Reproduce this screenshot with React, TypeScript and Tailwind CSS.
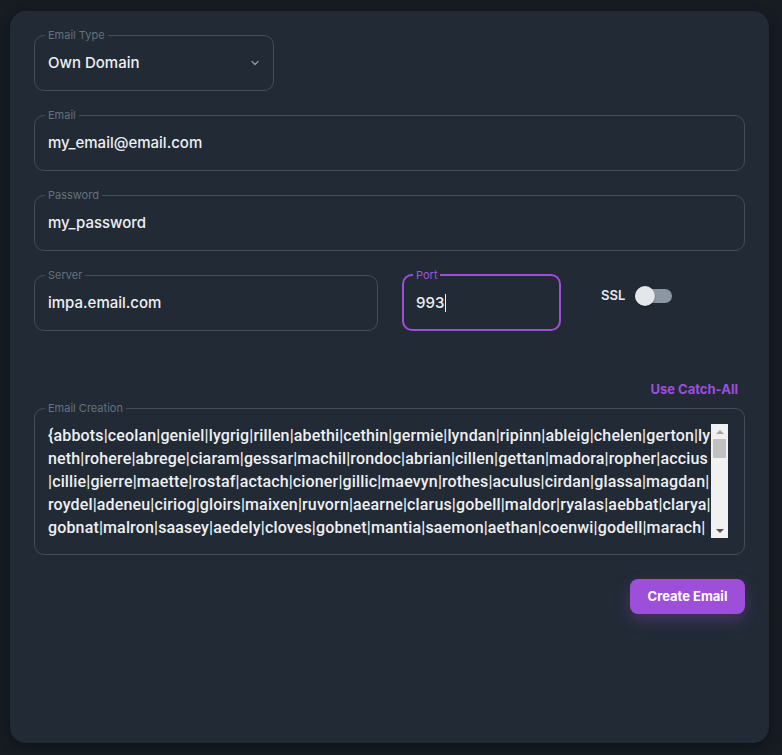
import { ChevronDown } from "lucide-react";

const names =
  "{abbots|ceolan|geniel|lygrig|rillen|abethi|cethin|germie|lyndan|ripinn|ableig|chelen|gerton|lyneth|rohere|abrege|ciaram|gessar|machil|rondoc|abrian|cillen|gettan|madora|ropher|accius|cillie|gierre|maette|rostaf|actach|cioner|gillic|maevyn|rothes|aculus|cirdan|glassa|magdan|roydel|adeneu|ciriog|gloirs|maixen|ruvorn|aearne|clarus|gobell|maldor|ryalas|aebbat|clarya|gobnat|malron|saasey|aedely|cloves|gobnet|mantia|saemon|aethan|coenwi|godell|marach|samiri|aelgar|colwyn|goraed|marcel|sarlin|aenwyn|corlan|gorvid|marith|selvan|aerlin|cothra|gravel|marlon|sendra|aethil|creyna|grelan|martis|sevran}";

function Field({
  label,
  children,
  active = false,
  className = "",
}: {
  label: string;
  children: React.ReactNode;
  active?: boolean;
  className?: string;
}) {
  return (
    <fieldset
      className={
        "min-w-0 rounded-[10px] " +
        (active
          ? "border-2 border-[#9d4fd9] px-[9px] pb-[6px] "
          : "border border-[#434e5b] px-[10px] pb-[7px] ") +
        className
      }
    >
      <legend
        className={
          "px-[3px] text-[11px] leading-[14px] " +
          (active ? "text-[#a056dc]" : "text-[#66717e]")
        }
      >
        {label}
      </legend>
      {children}
    </fieldset>
  );
}

function Value({ children }: { children: React.ReactNode }) {
  return (
    <div className="mt-px flex h-[40px] items-center pl-[3px] text-[15px] font-medium text-[#eef0f3]">
      {children}
    </div>
  );
}

function Scrollbar() {
  return (
    <div className="flex h-[114px] w-[17px] shrink-0 flex-col items-center bg-[#f1f1f1]">
      <div className="flex h-[15px] w-full items-center justify-center">
        <div className="h-0 w-0 border-x-[4px] border-b-[4px] border-x-transparent border-b-[#a3a3a3]" />
      </div>
      <div className="h-[19px] w-[13px] bg-[#c1c1c1]" />
      <div className="flex-1" />
      <div className="flex h-[15px] w-full items-center justify-center">
        <div className="h-0 w-0 border-x-[4px] border-t-[4px] border-x-transparent border-t-[#505050]" />
      </div>
    </div>
  );
}

export default function App() {
  return (
    <div
      className="min-h-[755px] bg-[#171c23] pl-[10px] pr-[13px] pt-[11px] pb-[12px]"
      style={{ fontFamily: "Inter, 'Noto Sans', sans-serif" }}
    >
      <div className="flex h-[732px] flex-col rounded-[16px] bg-[#212a35] px-[24px] pt-[17px] shadow-[0_4px_12px_rgba(0,0,0,0.35)]">
        <Field label="Email Type" className="w-[240px]">
          <div className="mt-px flex h-[40px] items-center justify-between pl-[3px] pr-[2px]">
            <span className="text-[15px] font-medium text-[#eef0f3]">Own Domain</span>
            <ChevronDown className="size-[12px] text-[#8d98a6]" strokeWidth={2.5} />
          </div>
        </Field>

        <Field label="Email" className="mt-[17px]">
          <Value>my_email@email.com</Value>
        </Field>

        <Field label="Password" className="mt-[17px]">
          <Value>my_password</Value>
        </Field>

        <div className="mt-[17px] flex items-start gap-[24px]">
          <Field label="Server" className="w-[344px]">
            <Value>impa.email.com</Value>
          </Field>
          <Field label="Port" active className="w-[159px]">
            <Value>
              993
              <span className="ml-px h-[18px] w-px bg-[#eef0f3]" />
            </Value>
          </Field>
          <div className="ml-[16px] mt-[18px] flex items-center gap-[10px]">
            <span className="text-[13px] font-semibold text-[#e6e9ee]">SSL</span>
            <div className="flex h-[14px] w-[37px] items-center rounded-full bg-[#8c97a3]">
              <div className="size-[20px] rounded-full bg-[#e3e6ea] shadow-[0_1px_2px_rgba(0,0,0,0.4)]" />
            </div>
          </div>
        </div>

        <div className="mt-[51px] flex justify-end pr-[7px]">
          <button
            type="button"
            className="text-[13px] font-bold leading-[14px] text-[#9d4fd9]"
          >
            Use Catch-All
          </button>
        </div>

        <Field label="Email Creation" className="mt-[5px] !pb-[16px]">
          <div className="mt-[9px] flex">
            <textarea
              readOnly
              defaultValue={names}
              className="block h-[114px] w-[666px] resize-none overflow-hidden break-all bg-transparent pl-[3px] text-[16px] font-medium leading-[23px] tracking-[0.15px] text-[#eef0f3] outline-none"
              style={{ fontFamily: "Roboto, sans-serif" }}
            />
            <Scrollbar />
          </div>
        </Field>

        <div className="mt-[24px] flex justify-end">
          <button
            type="button"
            className="h-[35px] w-[115px] rounded-[8px] bg-[#9d4fd9] text-[13px] font-bold text-white shadow-[0_6px_16px_rgba(157,79,217,0.3)]"
          >
            Create Email
          </button>
        </div>
      </div>
    </div>
  );
}
